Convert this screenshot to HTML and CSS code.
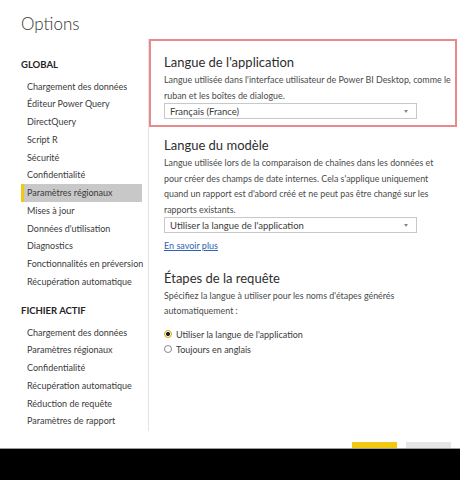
FILE: index.html
```html
<!DOCTYPE html>
<html lang="fr">
<head>
<meta charset="utf-8">
<title>Options</title>
<link rel="stylesheet" href="styles.css">
</head>
<body>
<div class="window">
  <h1 class="title">Options</h1>
  <div class="main">
    <nav class="sidebar">
      <div class="group">
        <div class="group-title">GLOBAL</div>
        <ul class="nav-list">
          <li>Chargement des données</li>
          <li>Éditeur Power Query</li>
          <li>DirectQuery</li>
          <li>Script R</li>
          <li>Sécurité</li>
          <li>Confidentialité</li>
          <li class="active">Paramètres régionaux</li>
          <li>Mises à jour</li>
          <li>Données d'utilisation</li>
          <li>Diagnostics</li>
          <li>Fonctionnalités en préversion</li>
          <li>Récupération automatique</li>
        </ul>
      </div>
      <div class="group">
        <div class="group-title">FICHIER ACTIF</div>
        <ul class="nav-list">
          <li>Chargement des données</li>
          <li>Paramètres régionaux</li>
          <li>Confidentialité</li>
          <li>Récupération automatique</li>
          <li>Réduction de requête</li>
          <li>Paramètres de rapport</li>
        </ul>
      </div>
    </nav>
    <section class="content">
      <div class="setting highlighted">
        <h2 class="setting-title">Langue de l'application</h2>
        <p class="desc">Langue utilisée dans l'interface utilisateur de Power BI Desktop, comme le<br>ruban et les boîtes de dialogue.</p>
        <div class="select"><span>Français (France)</span><span class="caret"></span></div>
      </div>
      <div class="setting">
        <h2 class="setting-title">Langue du modèle</h2>
        <p class="desc">Langue utilisée lors de la comparaison de chaînes dans les données et<br>pour créer des champs de date internes. Cela s'applique uniquement<br>quand un rapport est d'abord créé et ne peut pas être changé sur les<br>rapports existants.</p>
        <div class="select"><span>Utiliser la langue de l'application</span><span class="caret"></span></div>
        <a class="link" href="#">En savoir plus</a>
      </div>
      <div class="setting">
        <h2 class="setting-title">Étapes de la requête</h2>
        <p class="desc">Spécifiez la langue à utiliser pour les noms d'étapes générés<br>automatiquement :</p>
        <div class="radios">
          <div class="radio checked"><span class="dot"></span>Utiliser la langue de l'application</div>
          <div class="radio"><span class="dot"></span>Toujours en anglais</div>
        </div>
      </div>
    </section>
  </div>
  <div class="footer">
    <button class="btn primary">OK</button>
    <button class="btn">Annuler</button>
  </div>
</div>
<div class="blackbar"></div>
</body>
</html>
```
FILE: styles.css
```css
html, body {
  margin: 0;
  padding: 0;
}
body {
  width: 460px;
  height: 480px;
  overflow: hidden;
  background: #ffffff;
  font-family: Lato, "Open Sans", sans-serif;
  color: #3b3b3b;
}
.window {
  height: 448px;
  display: flex;
  flex-direction: column;
}
.title {
  margin: 0;
  height: 39px;
  box-sizing: border-box;
  padding: 10px 0 0 21px;
  font-size: 17px;
  font-weight: 300;
  line-height: 28px;
  color: #333333;
}
.main {
  display: flex;
  height: 392px;
}
.sidebar {
  width: 148px;
  flex-shrink: 0;
  border-right: 1px solid #e3e3e3;
  padding-top: 17px;
}
.group + .group {
  margin-top: 11.4px;
}
.group-title {
  margin: 0 0 3.6px 21px;
  font-size: 9.5px;
  font-weight: 700;
  line-height: 18px;
  color: #252423;
}
.nav-list {
  list-style: none;
  margin: 0 0 0 21px;
  padding: 0;
  width: 121px;
}
.nav-list li {
  height: 17.75px;
  line-height: 17.75px;
  padding-left: 6px;
  font-size: 9px;
  white-space: nowrap;
  color: #3b3b3b;
}
.nav-list li.active {
  background: #c8c8c8;
  border-left: 3px solid #f2c811;
  padding-left: 3px;
}
.content {
  width: 308px;
  min-width: 0;
  display: flex;
  flex-direction: column;
}
.setting {
  border: 2px solid transparent;
  padding: 6px 13px 5px;
}
.setting.highlighted {
  border-color: #e8898c;
  padding: 11px 13px 6px;
}
.setting-title {
  margin: 0;
  font-size: 13px;
  font-weight: 400;
  line-height: 20px;
  color: #2e2e2e;
}
.desc {
  margin: 0;
  font-size: 8.9px;
  line-height: 15.5px;
  color: #4a4a4a;
  white-space: nowrap;
}
.select {
  width: 253px;
  height: 16px;
  box-sizing: border-box;
  border: 1px solid #c8c8c8;
  display: flex;
  align-items: center;
  justify-content: space-between;
  padding: 0 8px 0 5px;
  font-size: 9.5px;
  color: #3b3b3b;
}
.caret {
  width: 0;
  height: 0;
  border-left: 2px solid transparent;
  border-right: 2px solid transparent;
  border-top: 3px solid #888888;
}
.link {
  display: block;
  margin-top: 4.5px;
  line-height: 15px;
  font-size: 9px;
  color: #2e62b5;
  text-decoration: underline;
  width: max-content;
}
.radios {
  margin-top: 8px;
}
.radio {
  display: flex;
  align-items: center;
  gap: 4px;
  height: 15px;
  font-size: 9px;
  color: #3b3b3b;
}
.dot {
  width: 8px;
  height: 8px;
  box-sizing: border-box;
  border: 1px solid #8a8a8a;
  border-radius: 50%;
  background: #ffffff;
}
.radio.checked .dot {
  border-color: #d4a80c;
  background: radial-gradient(circle, #222222 0 1.8px, #ffffff 2.3px);
}
.footer {
  height: 17px;
  box-sizing: border-box;
  overflow: hidden;
  display: flex;
  justify-content: flex-end;
  gap: 9px;
  padding: 11px 9px 0 0;
}
.btn {
  flex-shrink: 0;
  width: 45px;
  height: 18px;
  border: none;
  padding: 0;
  font-family: Lato, "Open Sans", sans-serif;
  font-size: 9.5px;
  color: #333333;
  background: #e6e6e6;
}
.btn.primary {
  background: #f2c811;
}
.blackbar {
  height: 31px;
  background: #000000;
  border-top: 1px solid #9c9c9c;
}
```
